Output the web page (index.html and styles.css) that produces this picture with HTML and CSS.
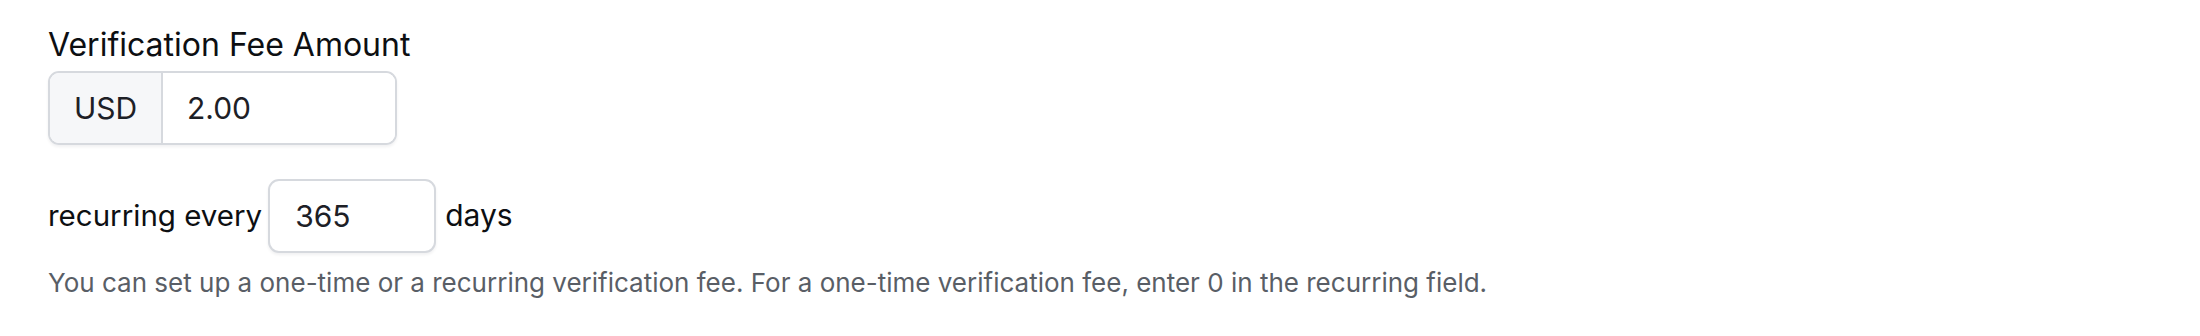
FILE: index.html
```html
<!DOCTYPE html>
<html lang="en">
<head>
<meta charset="utf-8">
<title>Verification Fee</title>
<link rel="stylesheet" href="styles.css">
</head>
<body>
<div class="form">
  <label class="field-label" for="fee">Verification Fee Amount</label>
  <div class="input-group">
    <span class="addon">USD</span>
    <input id="fee" class="input main-input" type="text" value="2.00">
  </div>
  <div class="recurring-row">
    <span class="row-text">recurring every</span>
    <input class="input days-input" type="text" value="365">
    <span class="row-text days">days</span>
  </div>
  <p class="help">You can set up a one-time or a recurring verification fee. For a one-time verification fee, enter 0 in the recurring field.</p>
</div>
</body>
</html>
```

FILE: styles.css
```css
* { box-sizing: border-box; }

html, body {
  margin: 0;
  padding: 0;
  background: #ffffff;
}

body {
  font-family: "Inter", "Lato", "Liberation Sans", sans-serif;
  color: #111318;
  font-variant-ligatures: none;
}

.form {
  padding: 21px 0 0 48px;
}

.field-label {
  display: block;
  font-size: 32px;
  line-height: 1.5;
  color: #0d0f12;
  margin-bottom: 2px;
}

.input-group {
  display: flex;
  width: 349px;
  height: 74px;
  border: 2px solid #d6d9de;
  border-radius: 11px;
  overflow: hidden;
  box-shadow: 0 2px 3px rgba(16, 24, 40, 0.06);
}

.addon {
  display: flex;
  align-items: center;
  justify-content: center;
  width: 113px;
  flex: none;
  background: #f6f7f9;
  border-right: 2px solid #d6d9de;
  font-size: 30px;
  color: #1d2026;
}

.input {
  font-family: inherit;
  font-size: 30px;
  color: #1d2026;
  background: #ffffff;
  outline: none;
}

.main-input {
  flex: 1;
  min-width: 0;
  border: none;
  padding: 0 0 0 24px;
}

.recurring-row {
  display: flex;
  align-items: center;
  gap: 6px;
  margin-top: 34px;
}

.row-text {
  font-size: 29.5px;
  line-height: 1.5;
  color: #0d0f12;
  padding-bottom: 2px;
}

.days {
  margin-left: 3px;
  font-size: 30px;
}

.days-input {
  width: 168px;
  height: 74px;
  border: 2px solid #d6d9de;
  border-radius: 11px;
  padding: 0 0 0 25px;
  box-shadow: 0 2px 3px rgba(16, 24, 40, 0.06);
}

.help {
  margin: 10px 0 0;
  font-size: 26px;
  line-height: 1.5;
  color: #595e66;
}
```
